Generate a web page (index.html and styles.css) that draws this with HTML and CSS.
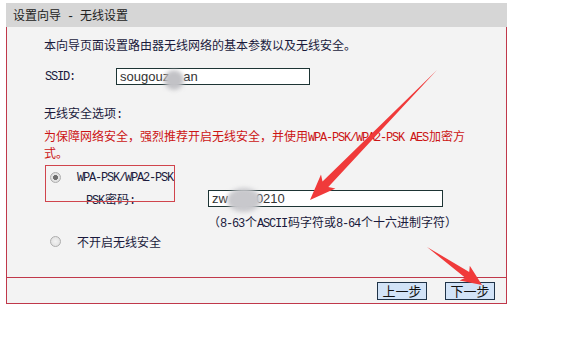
FILE: index.html
```html
<!DOCTYPE html>
<html lang="zh-CN">
<head>
  <meta charset="UTF-8" />
  <title>设置向导 - 无线设置</title>
  <link rel="stylesheet" href="styles.css">
</head>
<body>
  <div class="wizard">
    <div class="title-bar">设置向导<span class="en"> - </span>无线设置</div>
    <div class="panel">
      <div class="content">
        <p class="intro">本向导页面设置路由器无线网络的基本参数以及无线安全。</p>
        <div class="field-row ssid">
          <span class="label en">SSID:</span>
          <div class="field">sougouz<span class="smudge round"></span>an</div>
        </div>
        <p class="section-title">无线安全选项<span class="en">:</span></p>
        <p class="warning">为保障网络安全，强烈推荐开启无线安全，并使用<span class="en">WPA-PSK/WPA2-PSK AES</span>加密方式。</p>
        <div class="option first"><span class="radio checked"></span><span class="en">WPA-PSK/WPA2-PSK</span></div>
        <div class="field-row psk">
          <span class="label"><span class="en">PSK</span>密码<span class="en">:</span></span>
          <div class="field wide">zw<span class="smudge oval"></span>0210</div>
        </div>
        <p class="hint">（<span class="en">8-63</span>个<span class="en">ASCII</span>码字符或<span class="en">8-64</span>个十六进制字符）</p>
        <div class="option"><span class="radio"></span>不开启无线安全</div>
      </div>
      <div class="footer">
        <button class="btn">上一步</button>
        <button class="btn">下一步</button>
      </div>
    </div>
  </div>

  <!-- annotations drawn over the screenshot -->
  <div class="mark-box"></div>
  <svg class="arrows" width="575" height="359" viewBox="0 0 575 359">
    <polygon points="437,70 328.3,187.1 335.4,188.4 310,200 321,174.4 322.5,181.5" />
    <polygon points="427,247 465.2,277.7 459.6,280.5 482,285 469.8,265.7 469.2,271.9" />
  </svg>
</body>
</html>
```

FILE: styles.css
```css
* {
  box-sizing: border-box;
  margin: 0;
  padding: 0;
}
body {
  font-family: "Noto Sans CJK SC", sans-serif;
  font-size: 12px;
  color: #1a1a3c;
  background: #fff;
  position: relative;
  width: 575px;
  height: 359px;
  overflow: hidden;
}
.en {
  font-family: "Liberation Mono", monospace;
  font-size: 12px;
  letter-spacing: -1.2px;
  margin-right: 1px;
  line-height: 1;
}
.wizard {
  width: 501px;
  margin: 3px 0 0 6px;
}
.title-bar {
  height: 24px;
  line-height: 24px;
  padding-left: 7px;
  background: #d6d6d6;
  color: #222;
}
.panel {
  background: #f3f3f3;
  border: 1px solid #c0384a;
  border-top: none;
}
.content {
  height: 250px;
  padding: 9px 0 0 37px;
}
.intro {
  line-height: 18px;
}
.field-row {
  display: flex;
  align-items: center;
}
.ssid {
  margin-top: 14px;
}
.ssid .label {
  width: 71px;
  padding-left: 1px;
}
.field {
  height: 17px;
  width: 194px;
  border: 1px solid #1d3434;
  background: #fff;
  font-family: "Liberation Sans", Arial, sans-serif;
  font-size: 13px;
  line-height: 15px;
  padding-left: 3px;
  color: #333;
  white-space: nowrap;
}
.field.wide {
  width: 235px;
}
.smudge {
  position: relative;
  display: inline-block;
  height: 1px;
  vertical-align: middle;
}
.smudge::before {
  content: "";
  position: absolute;
  background: #c2c2c6;
  border-radius: 50%;
  filter: blur(2px);
}
.smudge.round {
  width: 14px;
}
.smudge.round::before {
  left: -5px;
  top: -7px;
  width: 20px;
  height: 20px;
}
.smudge.oval {
  width: 28px;
}
.smudge.oval::before {
  left: -1px;
  top: -11px;
  width: 34px;
  height: 24px;
  background: #c8c8cc;
}
.section-title {
  margin-top: 19px;
  line-height: 17px;
}
.warning {
  width: 428px;
  margin-top: 6px;
  line-height: 17px;
  color: #cc1414;
}
.option {
  display: flex;
  align-items: center;
  height: 17px;
  padding-left: 6px;
  margin-top: 3px;
}
.option.first {
  margin-top: 8px;
}
.radio {
  width: 11px;
  height: 11px;
  margin-right: 16px;
  border: 1px solid #adadad;
  border-radius: 50%;
  background: radial-gradient(circle, #f2f2f2 0, #dcdcdc 100%);
}
.radio.checked {
  background: radial-gradient(circle, #6e6e6e 0, #6e6e6e 2.2px, #e6e6e6 2.8px, #d4d4d4 100%);
}
.psk {
  margin-top: 4px;
  padding-left: 42px;
}
.psk .label {
  width: 122px;
}
.hint {
  margin-top: 6px;
  padding-left: 164px;
  line-height: 17px;
}
.footer {
  height: 26px;
  border-top: 1px solid #c0384a;
  display: flex;
  align-items: center;
  justify-content: flex-end;
  gap: 18px;
  padding-right: 11px;
}
.btn {
  width: 50px;
  height: 18px;
  border: 1px solid #1f3348;
  background: #d2e3f7;
  font-family: "Noto Sans CJK SC", sans-serif;
  font-size: 13px;
  line-height: 16px;
  color: #111;
}
.mark-box {
  position: absolute;
  left: 45px;
  top: 165px;
  width: 130px;
  height: 37px;
  border: 1px solid #d0444c;
}
.arrows {
  position: absolute;
  left: 0;
  top: 0;
  pointer-events: none;
}
.arrows polygon {
  fill: #f03a3a;
}
```
